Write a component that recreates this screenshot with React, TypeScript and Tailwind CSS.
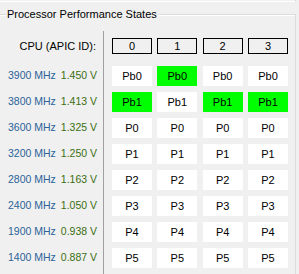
import React from "react";

const rows: { mhz: string; v: string; cells: string[]; green: boolean[] }[] = [
  { mhz: "3900 MHz", v: "1.450 V", cells: ["Pb0", "Pb0", "Pb0", "Pb0"], green: [false, true, false, false] },
  { mhz: "3800 MHz", v: "1.413 V", cells: ["Pb1", "Pb1", "Pb1", "Pb1"], green: [true, false, true, true] },
  { mhz: "3600 MHz", v: "1.325 V", cells: ["P0", "P0", "P0", "P0"], green: [false, false, false, false] },
  { mhz: "3200 MHz", v: "1.250 V", cells: ["P1", "P1", "P1", "P1"], green: [false, false, false, false] },
  { mhz: "2800 MHz", v: "1.163 V", cells: ["P2", "P2", "P2", "P2"], green: [false, false, false, false] },
  { mhz: "2400 MHz", v: "1.050 V", cells: ["P3", "P3", "P3", "P3"], green: [false, false, false, false] },
  { mhz: "1900 MHz", v: "0.938 V", cells: ["P4", "P4", "P4", "P4"], green: [false, false, false, false] },
  { mhz: "1400 MHz", v: "0.887 V", cells: ["P5", "P5", "P5", "P5"], green: [false, false, false, false] },
];

export default function App() {
  return (
    <div
      className="w-[299px] h-[274px] bg-[#f0f0f0] overflow-hidden text-[11px] text-black"
      style={{ fontFamily: '"Liberation Sans", Arial, sans-serif' }}
    >
      {/* bottom edge of previous group */}
      <div className="h-[2px] w-[296px] border-b border-r border-b-white border-r-[#dcdcdc]" />
      {/* group box */}
      <div className="relative mt-[12px] w-[296px] h-[300px] border-t border-r border-[#dcdcdc]">
        <div className="absolute left-0 right-0 top-0 h-px bg-white" />
        <div className="absolute top-[-8px] left-[6px] bg-[#f0f0f0] px-px leading-[14px] text-[11px]">
          Processor Performance States
        </div>
        <div className="flex pt-[16px]">
          {/* labels column */}
          <div className="w-[103px] pt-[7px] flex flex-col">
            <div className="h-[16px] flex items-center justify-end pr-[7px]">CPU (APIC ID):</div>
            <div className="mt-[12px] flex flex-col gap-[6px]">
              {rows.map((r) => (
                <div key={r.mhz} className="h-[20px] flex items-center justify-between pl-[8px] pr-[6px] text-[10.5px]">
                  <span className="text-[#2a6399]">{r.mhz}</span>
                  <span className="text-[#3b6e12]">{r.v}</span>
                </div>
              ))}
            </div>
          </div>
          {/* grid */}
          <div className="border-l border-[#a0a0a0] pl-[8px] pt-[7px] h-[260px]">
            <div className="grid grid-cols-[40px_40px_40px_40px] gap-x-[5.33px]">
              {["0", "1", "2", "3"].map((c) => (
                <div key={c} className="h-[16px] border border-black flex items-center justify-center leading-none">
                  {c}
                </div>
              ))}
            </div>
            <div className="mt-[12px] grid grid-cols-[40px_40px_40px_40px] gap-x-[5.33px] gap-y-[6px]">
              {rows.map((r) =>
                r.cells.map((c, i) => (
                  <div
                    key={r.mhz + i}
                    className={
                      "h-[20px] flex items-center justify-center " + (r.green[i] ? "bg-[#00ff00]" : "bg-white")
                    }
                  >
                    {c}
                  </div>
                ))
              )}
            </div>
          </div>
        </div>
      </div>
    </div>
  );
}
